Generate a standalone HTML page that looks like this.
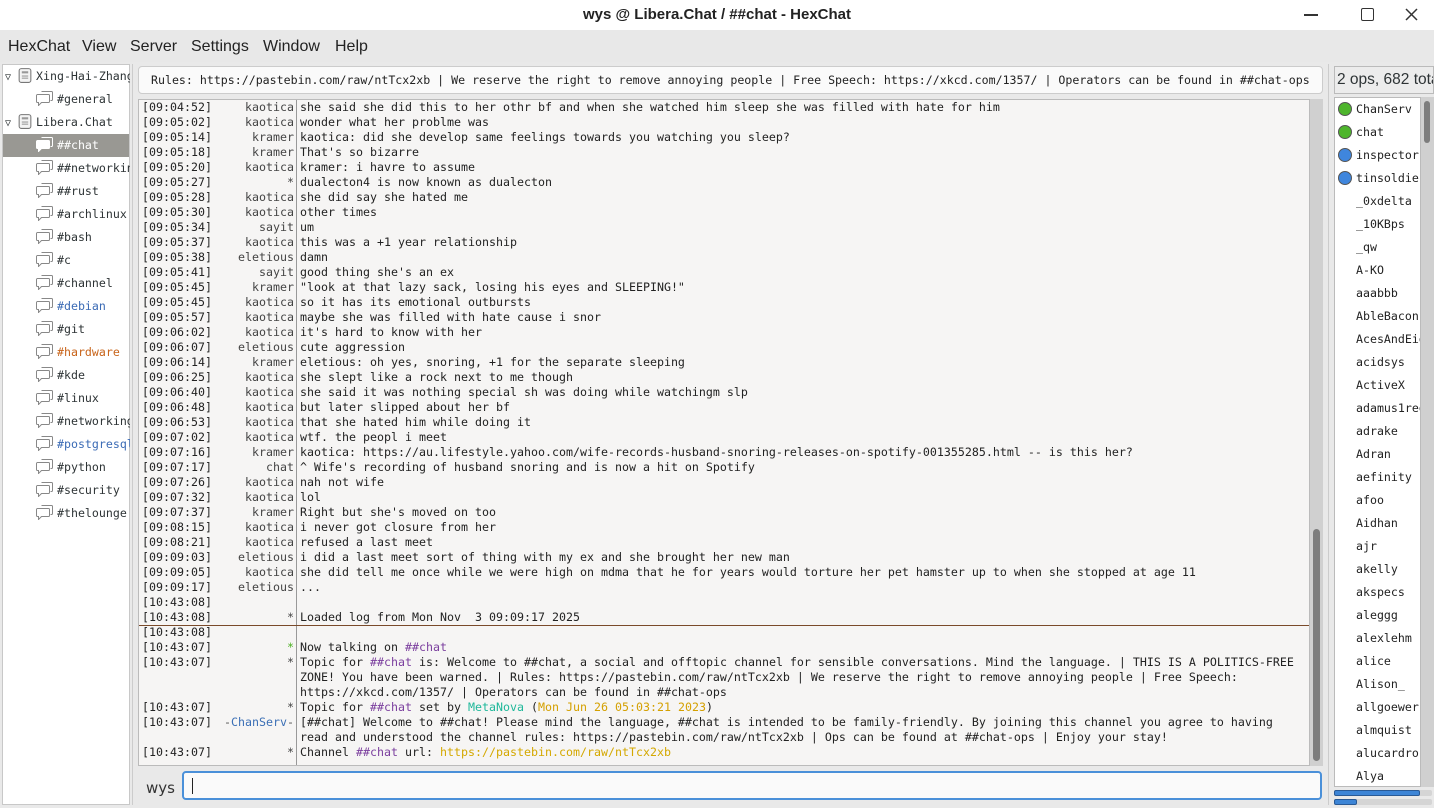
<!DOCTYPE html>
<html><head><meta charset="utf-8"><style>
*{margin:0;padding:0;box-sizing:border-box}
body{width:1434px;height:808px;overflow:hidden;background:#e9e9e9;font-family:"DejaVu Sans Mono","Liberation Mono",monospace;color:#2e3436;position:relative}
.abs{position:absolute}
#title{left:0;top:0;width:1434px;height:30px;background:#fff;font-family:"Liberation Sans",sans-serif;font-weight:bold;font-size:15px;text-align:center;line-height:30px;color:#222}
#menu{left:0;top:30px;width:1434px;height:32px;background:#e8e8e8;font-family:"Liberation Sans",sans-serif;font-size:16px;color:#222}
#menu span{position:absolute;top:8px}
#tree{left:2px;top:64px;width:128px;height:741px;background:#fff;border:1px solid #c8c8c8;font-size:11.6px;overflow:hidden}
.ti{position:absolute;height:23px;line-height:23px;white-space:nowrap}
.ti svg{vertical-align:middle;margin-right:3px;margin-top:-3px}
#topic{left:138px;top:66px;width:1185px;height:28px;background:#fafafa;border:1px solid #ccc;border-radius:4px;font-size:11.6px;line-height:26px;padding-left:12px;white-space:nowrap;overflow:hidden;color:#222}
#chat{left:138px;top:99px;width:1172px;height:667px;background:#f6f5f4;border:1px solid #bbb;font-size:11.63px;overflow:hidden;color:#222}
#vsep{left:157px;top:0;width:1px;height:667px;background:#999}
.l{position:absolute;left:3px;height:15px;line-height:15px;white-space:pre;width:1160px}
.ts{position:absolute;left:0}
.nk{position:absolute;left:0;width:152px;text-align:right;color:#444}
.tx{position:absolute;left:158px}
#sb{left:1310px;top:99px;width:13px;height:667px;background:#d0d0d0}
#input{left:182px;top:771px;width:1140px;height:29px;background:#fafafa;border:2px solid #4a90d9;border-radius:4px}
#ulhead{left:1334px;top:66px;width:100px;height:28px;background:#ececec;border:1px solid #bbb;font-family:"Liberation Sans",sans-serif;font-size:15.5px;line-height:26px;padding-left:2px;white-space:nowrap;overflow:hidden}
#ul{left:1334px;top:97px;width:87px;height:690px;background:#fff;border:1px solid #bbb;font-size:11.6px;overflow:hidden;color:#222}
.u{position:absolute;left:21px;height:23px;line-height:23px;white-space:nowrap}
.dot{position:absolute;left:3px;width:14px;height:14px;border-radius:50%;border:1px solid #555}
.p{color:#7b3f9e}
</style></head><body>
<svg width="0" height="0" style="position:absolute"><defs>
<symbol id="b" viewBox="0 0 18 16"><path d="M5.5 1.5h10a1 1 0 0 1 1 1v7a1 1 0 0 1-1 1h-1" fill="none" stroke="#888"/><path d="M1.5 4.5h11a1 1 0 0 1 1 1v6a1 1 0 0 1-1 1h-7l-3 3v-3h-1a1 1 0 0 1-1-1v-6a1 1 0 0 1 1-1z" fill="#fff" stroke="#888"/></symbol>
<symbol id="bw" viewBox="0 0 18 16"><path d="M5.5 1.5h10a1 1 0 0 1 1 1v7a1 1 0 0 1-1 1h-1" fill="none" stroke="#fff"/><path d="M1.5 4.5h11a1 1 0 0 1 1 1v6a1 1 0 0 1-1 1h-7l-3 3v-3h-1a1 1 0 0 1-1-1v-6a1 1 0 0 1 1-1z" fill="#fff" stroke="#fff"/></symbol>
<symbol id="s" viewBox="0 0 14 16"><rect x="1.5" y="1.5" width="11" height="13" rx="2" fill="#f4f4f4" stroke="#777"/><rect x="4" y="4" width="6" height="2" fill="#999"/><rect x="4" y="8" width="6" height="1" fill="#999"/><rect x="4" y="10" width="6" height="1" fill="#999"/></symbol>
</defs></svg>
<div id="title" class="abs">wys @ Libera.Chat / ##chat - HexChat</div>
<div class="abs" style="left:1304px;top:14px;width:14px;height:1.5px;background:#333"></div>
<div class="abs" style="left:1361px;top:8px;width:13px;height:13px;border:1.5px solid #333;border-radius:2px"></div>
<svg class="abs" style="left:1405px;top:8px" width="13" height="13"><path d="M1 1L12 12M12 1L1 12" stroke="#333" stroke-width="1.5"/></svg>
<div id="menu" class="abs"><span style="left:8px">HexChat</span><span style="left:82px">View</span><span style="left:130px">Server</span><span style="left:191px">Settings</span><span style="left:263px">Window</span><span style="left:335px">Help</span></div>
<div class="abs" style="left:132px;top:64px;width:1px;height:741px;background:#ccc"></div>
<div class="abs" style="left:1328px;top:64px;width:1px;height:741px;background:#ccc"></div>

<div id="tree" class="abs">
<div class="abs" style="left:0;top:69px;width:126px;height:23px;background:#999893"></div>
</div>
<div class="abs" style="left:2px;top:64px;width:128px;height:741px;font-size:11.6px;overflow:hidden">
<div class="ti" style="top:1px;left:3px"><span style="font-size:10px;margin-right:6px">▽</span><svg width="16" height="17"><use href="#s"/></svg>Xing-Hai-Zhang</div>
<div class="ti" style="top:24px;left:34px"><svg width="18" height="16"><use href="#b"/></svg>#general</div>
<div class="ti" style="top:47px;left:3px"><span style="font-size:10px;margin-right:6px">▽</span><svg width="16" height="17"><use href="#s"/></svg>Libera.Chat</div>
<div class="ti" style="top:70px;left:34px;color:#fff"><svg width="18" height="16"><use href="#bw"/></svg>##chat</div>
<div class="ti" style="top:93px;left:34px"><svg width="18" height="16"><use href="#b"/></svg>##networking</div>
<div class="ti" style="top:116px;left:34px"><svg width="18" height="16"><use href="#b"/></svg>##rust</div>
<div class="ti" style="top:139px;left:34px"><svg width="18" height="16"><use href="#b"/></svg>#archlinux</div>
<div class="ti" style="top:162px;left:34px"><svg width="18" height="16"><use href="#b"/></svg>#bash</div>
<div class="ti" style="top:185px;left:34px"><svg width="18" height="16"><use href="#b"/></svg>#c</div>
<div class="ti" style="top:208px;left:34px"><svg width="18" height="16"><use href="#b"/></svg>#channel</div>
<div class="ti" style="top:231px;left:34px;color:#3b6bb5"><svg width="18" height="16"><use href="#b"/></svg>#debian</div>
<div class="ti" style="top:254px;left:34px"><svg width="18" height="16"><use href="#b"/></svg>#git</div>
<div class="ti" style="top:277px;left:34px;color:#c8641a"><svg width="18" height="16"><use href="#b"/></svg>#hardware</div>
<div class="ti" style="top:300px;left:34px"><svg width="18" height="16"><use href="#b"/></svg>#kde</div>
<div class="ti" style="top:323px;left:34px"><svg width="18" height="16"><use href="#b"/></svg>#linux</div>
<div class="ti" style="top:346px;left:34px"><svg width="18" height="16"><use href="#b"/></svg>#networking</div>
<div class="ti" style="top:369px;left:34px;color:#3b6bb5"><svg width="18" height="16"><use href="#b"/></svg>#postgresql</div>
<div class="ti" style="top:392px;left:34px"><svg width="18" height="16"><use href="#b"/></svg>#python</div>
<div class="ti" style="top:415px;left:34px"><svg width="18" height="16"><use href="#b"/></svg>#security</div>
<div class="ti" style="top:438px;left:34px"><svg width="18" height="16"><use href="#b"/></svg>#thelounge</div>
</div>

<div id="topic" class="abs">Rules: https://pastebin.com/raw/ntTcx2xb | We reserve the right to remove annoying people | Free Speech: https://xkcd.com/1357/ | Operators can be found in ##chat-ops</div>

<div id="chat" class="abs">
<div id="vsep" class="abs"></div>
<div class="abs" style="left:0;top:525px;width:1172px;height:1px;background:#7a4a2a"></div>
<div class="l" style="top:0"><span class="ts">[09:04:52]</span><span class="nk">kaotica</span><span class="tx">she said she did this to her othr bf and when she watched him sleep she was filled with hate for him</span></div>
<div class="l" style="top:15px"><span class="ts">[09:05:02]</span><span class="nk">kaotica</span><span class="tx">wonder what her problme was</span></div>
<div class="l" style="top:30px"><span class="ts">[09:05:14]</span><span class="nk">kramer</span><span class="tx">kaotica: did she develop same feelings towards you watching you sleep?</span></div>
<div class="l" style="top:45px"><span class="ts">[09:05:18]</span><span class="nk">kramer</span><span class="tx">That's so bizarre</span></div>
<div class="l" style="top:60px"><span class="ts">[09:05:20]</span><span class="nk">kaotica</span><span class="tx">kramer: i havre to assume</span></div>
<div class="l" style="top:75px"><span class="ts">[09:05:27]</span><span class="nk">*</span><span class="tx">dualecton4 is now known as dualecton</span></div>
<div class="l" style="top:90px"><span class="ts">[09:05:28]</span><span class="nk">kaotica</span><span class="tx">she did say she hated me</span></div>
<div class="l" style="top:105px"><span class="ts">[09:05:30]</span><span class="nk">kaotica</span><span class="tx">other times</span></div>
<div class="l" style="top:120px"><span class="ts">[09:05:34]</span><span class="nk">sayit</span><span class="tx">um</span></div>
<div class="l" style="top:135px"><span class="ts">[09:05:37]</span><span class="nk">kaotica</span><span class="tx">this was a +1 year relationship</span></div>
<div class="l" style="top:150px"><span class="ts">[09:05:38]</span><span class="nk">eletious</span><span class="tx">damn</span></div>
<div class="l" style="top:165px"><span class="ts">[09:05:41]</span><span class="nk">sayit</span><span class="tx">good thing she's an ex</span></div>
<div class="l" style="top:180px"><span class="ts">[09:05:45]</span><span class="nk">kramer</span><span class="tx">"look at that lazy sack, losing his eyes and SLEEPING!"</span></div>
<div class="l" style="top:195px"><span class="ts">[09:05:45]</span><span class="nk">kaotica</span><span class="tx">so it has its emotional outbursts</span></div>
<div class="l" style="top:210px"><span class="ts">[09:05:57]</span><span class="nk">kaotica</span><span class="tx">maybe she was filled with hate cause i snor</span></div>
<div class="l" style="top:225px"><span class="ts">[09:06:02]</span><span class="nk">kaotica</span><span class="tx">it's hard to know with her</span></div>
<div class="l" style="top:240px"><span class="ts">[09:06:07]</span><span class="nk">eletious</span><span class="tx">cute aggression</span></div>
<div class="l" style="top:255px"><span class="ts">[09:06:14]</span><span class="nk">kramer</span><span class="tx">eletious: oh yes, snoring, +1 for the separate sleeping</span></div>
<div class="l" style="top:270px"><span class="ts">[09:06:25]</span><span class="nk">kaotica</span><span class="tx">she slept like a rock next to me though</span></div>
<div class="l" style="top:285px"><span class="ts">[09:06:40]</span><span class="nk">kaotica</span><span class="tx">she said it was nothing special sh was doing while watchingm slp</span></div>
<div class="l" style="top:300px"><span class="ts">[09:06:48]</span><span class="nk">kaotica</span><span class="tx">but later slipped about her bf</span></div>
<div class="l" style="top:315px"><span class="ts">[09:06:53]</span><span class="nk">kaotica</span><span class="tx">that she hated him while doing it</span></div>
<div class="l" style="top:330px"><span class="ts">[09:07:02]</span><span class="nk">kaotica</span><span class="tx">wtf. the peopl i meet</span></div>
<div class="l" style="top:345px"><span class="ts">[09:07:16]</span><span class="nk">kramer</span><span class="tx">kaotica: https://au.lifestyle.yahoo.com/wife-records-husband-snoring-releases-on-spotify-001355285.html -- is this her?</span></div>
<div class="l" style="top:360px"><span class="ts">[09:07:17]</span><span class="nk">chat</span><span class="tx">^ Wife's recording of husband snoring and is now a hit on Spotify</span></div>
<div class="l" style="top:375px"><span class="ts">[09:07:26]</span><span class="nk">kaotica</span><span class="tx">nah not wife</span></div>
<div class="l" style="top:390px"><span class="ts">[09:07:32]</span><span class="nk">kaotica</span><span class="tx">lol</span></div>
<div class="l" style="top:405px"><span class="ts">[09:07:37]</span><span class="nk">kramer</span><span class="tx">Right but she's moved on too</span></div>
<div class="l" style="top:420px"><span class="ts">[09:08:15]</span><span class="nk">kaotica</span><span class="tx">i never got closure from her</span></div>
<div class="l" style="top:435px"><span class="ts">[09:08:21]</span><span class="nk">kaotica</span><span class="tx">refused a last meet</span></div>
<div class="l" style="top:450px"><span class="ts">[09:09:03]</span><span class="nk">eletious</span><span class="tx">i did a last meet sort of thing with my ex and she brought her new man</span></div>
<div class="l" style="top:465px"><span class="ts">[09:09:05]</span><span class="nk">kaotica</span><span class="tx">she did tell me once while we were high on mdma that he for years would torture her pet hamster up to when she stopped at age 11</span></div>
<div class="l" style="top:480px"><span class="ts">[09:09:17]</span><span class="nk">eletious</span><span class="tx">...</span></div>
<div class="l" style="top:495px"><span class="ts">[10:43:08]</span></div>
<div class="l" style="top:510px"><span class="ts">[10:43:08]</span><span class="nk">*</span><span class="tx">Loaded log from Mon Nov  3 09:09:17 2025</span></div>
<div class="l" style="top:525px"><span class="ts">[10:43:08]</span></div>
<div class="l" style="top:540px"><span class="ts">[10:43:07]</span><span class="nk" style="color:#4ab020">*</span><span class="tx">Now talking on <span class="p">##chat</span></span></div>
<div class="l" style="top:555px"><span class="ts">[10:43:07]</span><span class="nk">*</span><span class="tx">Topic for <span class="p">##chat</span> is: Welcome to ##chat, a social and offtopic channel for sensible conversations. Mind the language. | THIS IS A POLITICS-FREE</span></div>
<div class="l" style="top:570px"><span class="tx">ZONE! You have been warned. | Rules: https://pastebin.com/raw/ntTcx2xb | We reserve the right to remove annoying people | Free Speech:</span></div>
<div class="l" style="top:585px"><span class="tx">https://xkcd.com/1357/ | Operators can be found in ##chat-ops</span></div>
<div class="l" style="top:600px"><span class="ts">[10:43:07]</span><span class="nk">*</span><span class="tx">Topic for <span class="p">##chat</span> set by <span style="color:#1fb89a">MetaNova</span> (<span style="color:#d4a000">Mon Jun 26 05:03:21 2023</span>)</span></div>
<div class="l" style="top:615px"><span class="ts">[10:43:07]</span><span class="nk"><span style="color:#555">-</span><span style="color:#3b6fb5">ChanServ</span><span style="color:#555">-</span></span><span class="tx">[##chat] Welcome to ##chat! Please mind the language, ##chat is intended to be family-friendly. By joining this channel you agree to having</span></div>
<div class="l" style="top:630px"><span class="tx">read and understood the channel rules: https://pastebin.com/raw/ntTcx2xb | Ops can be found at ##chat-ops | Enjoy your stay!</span></div>
<div class="l" style="top:645px"><span class="ts">[10:43:07]</span><span class="nk">*</span><span class="tx">Channel <span class="p">##chat</span> url: <span style="color:#d4a800">https://pastebin.com/raw/ntTcx2xb</span></span></div>
</div>
<div id="sb" class="abs"><div class="abs" style="left:3px;top:430px;width:7px;height:232px;background:#7d7d7d;border-radius:4px"></div></div>

<div class="abs" style="left:146px;top:779px;font-family:'DejaVu Sans',sans-serif;font-size:15px;color:#333">wys</div>
<div id="input" class="abs"><div class="abs" style="left:8px;top:5px;width:1px;height:16px;background:#222"></div></div>

<div id="ulhead" class="abs">2 ops, 682 total</div>
<div id="ul" class="abs">
<div class="dot" style="top:4px;background:#4eb52c"></div><div class="u" style="top:0">ChanServ</div>
<div class="dot" style="top:27px;background:#4eb52c"></div><div class="u" style="top:23px">chat</div>
<div class="dot" style="top:50px;background:#3f86dd"></div><div class="u" style="top:46px">inspector</div>
<div class="dot" style="top:73px;background:#3f86dd"></div><div class="u" style="top:69px">tinsoldier</div>
<div class="u" style="top:92px">_0xdelta</div>
<div class="u" style="top:115px">_10KBps</div>
<div class="u" style="top:138px">_qw</div>
<div class="u" style="top:161px">A-KO</div>
<div class="u" style="top:184px">aaabbb</div>
<div class="u" style="top:207px">AbleBacon</div>
<div class="u" style="top:230px">AcesAndEights</div>
<div class="u" style="top:253px">acidsys</div>
<div class="u" style="top:276px">ActiveX</div>
<div class="u" style="top:299px">adamus1red</div>
<div class="u" style="top:322px">adrake</div>
<div class="u" style="top:345px">Adran</div>
<div class="u" style="top:368px">aefinity</div>
<div class="u" style="top:391px">afoo</div>
<div class="u" style="top:414px">Aidhan</div>
<div class="u" style="top:437px">ajr</div>
<div class="u" style="top:460px">akelly</div>
<div class="u" style="top:483px">akspecs</div>
<div class="u" style="top:506px">aleggg</div>
<div class="u" style="top:529px">alexlehm</div>
<div class="u" style="top:552px">alice</div>
<div class="u" style="top:575px">Alison_</div>
<div class="u" style="top:598px">allgoewer</div>
<div class="u" style="top:621px">almquist</div>
<div class="u" style="top:644px">alucardro</div>
<div class="u" style="top:667px">Alya</div>
</div>
<div class="abs" style="left:1421px;top:97px;width:13px;height:690px;background:#d0d0d0"><div class="abs" style="left:3px;top:4px;width:6px;height:42px;background:#7d7d7d;border-radius:3px"></div></div>
<div class="abs" style="left:1334px;top:790px;width:98px;height:6px;background:#d5d5d5;border-radius:2px"><div style="width:86px;height:6px;background:#3d85d6;border:1px solid #2a5a95;border-radius:2px"></div></div>
<div class="abs" style="left:1334px;top:799px;width:98px;height:6px;background:#d5d5d5;border-radius:2px"><div style="width:23px;height:6px;background:#3d85d6;border:1px solid #2a5a95;border-radius:2px"></div></div>
</body></html>
